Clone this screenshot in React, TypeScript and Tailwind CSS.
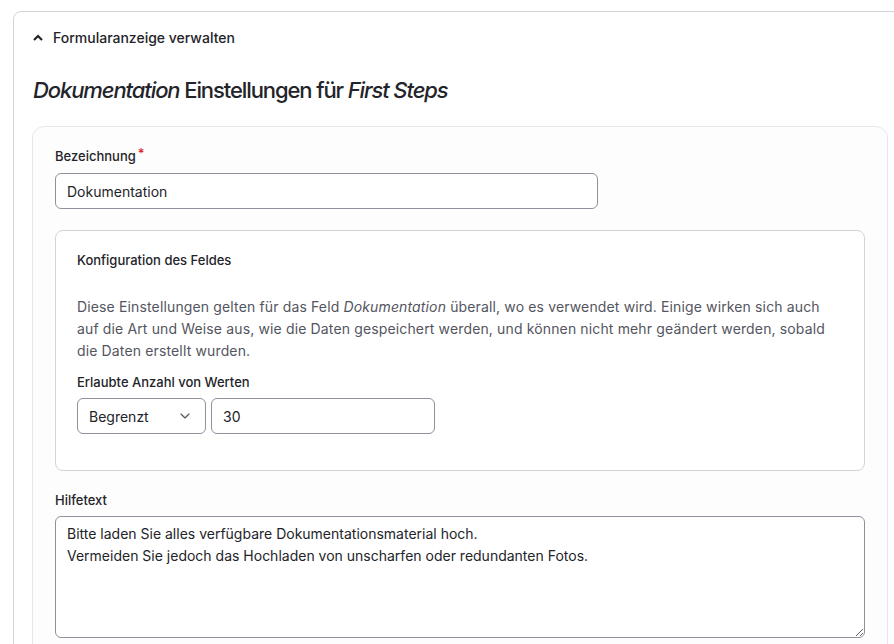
import { ChevronDown } from 'lucide-react'

const inputBox =
  'h-9 rounded-md border border-[#8e929c] bg-white px-[11px] text-[14px] text-[#232429] outline-none'

export default function App() {
  return (
    <div className="min-h-[644px] overflow-hidden bg-white font-['Inter',sans-serif] text-[#232429]">
      <div className="ml-[13px] mt-[11px] -mr-4 rounded-lg border border-[#d3d4d9] pb-10 pl-[18px] pr-[20px]">
        {/* collapsible header */}
        <div className="flex h-[50px] items-center gap-[10px] pl-[1px]">
          <svg width="10" height="7" viewBox="0 0 10 7">
            <path d="M1 6 5 2l4 4" fill="none" stroke="#232429" strokeWidth="2.2" />
          </svg>
          <span className="text-[14px] font-medium">Formularanzeige verwalten</span>
        </div>

        <h2 className="mt-[14px] pl-[1px] text-[22px] font-medium leading-[28px] tracking-[-0.05em]">
          <em>Dokumentation</em> Einstellungen für <em>First Steps</em>
        </h2>

        <div className="mr-[1px] mt-[22px] rounded-xl border border-[#e6e7ea] bg-[#fdfdfd] px-[22px] pb-10 pt-[20px]">
          <label className="flex text-[13px] font-medium leading-[18px]">
            Bezeichnung<span className="ml-[2px] -mt-[3px] text-[#d72222]">*</span>
          </label>
          <input className={`${inputBox} mt-[8px] w-[543px]`} defaultValue="Dokumentation" />

          <fieldset className="mt-[21px] rounded-lg border border-[#d3d4d9] bg-white px-[21px] pb-[36px] pt-[20px]">
            <div className="text-[13px] font-medium leading-[18px]">Konfiguration des Feldes</div>
            <p className="mt-[27px] max-w-[760px] text-[14px] leading-[22px] tracking-[0.01em] text-[#545560]">
              Diese Einstellungen gelten für das Feld <em>Dokumentation</em> überall, wo es verwendet wird. Einige
              wirken sich auch auf die Art und Weise aus, wie die Daten gespeichert werden, und können nicht mehr
              geändert werden, sobald die Daten erstellt wurden.
            </p>
            <div className="mt-[11px] text-[13px] font-medium leading-[18px]">Erlaubte Anzahl von Werten</div>
            <div className="mt-[7px] flex gap-[5px]">
              <div className={`${inputBox} flex w-[129px] items-center justify-between pr-[12px]`}>
                <span>Begrenzt</span>
                <ChevronDown className="h-4 w-4 text-[#545560]" strokeWidth={1.75} />
              </div>
              <input className={`${inputBox} w-[224px]`} defaultValue="30" />
            </div>
          </fieldset>

          <label className="mt-[20px] block text-[13px] font-medium leading-[18px]">Hilfetext</label>
          <textarea
            className="mt-[7px] block h-[122px] w-full resize-y rounded-md border border-[#8e929c] bg-white px-[11px] py-[6px] text-[14px] leading-[22px] text-[#232429] outline-none"
            defaultValue={
              'Bitte laden Sie alles verfügbare Dokumentationsmaterial hoch.\nVermeiden Sie jedoch das Hochladen von unscharfen oder redundanten Fotos.'
            }
          />
        </div>
      </div>
    </div>
  )
}
